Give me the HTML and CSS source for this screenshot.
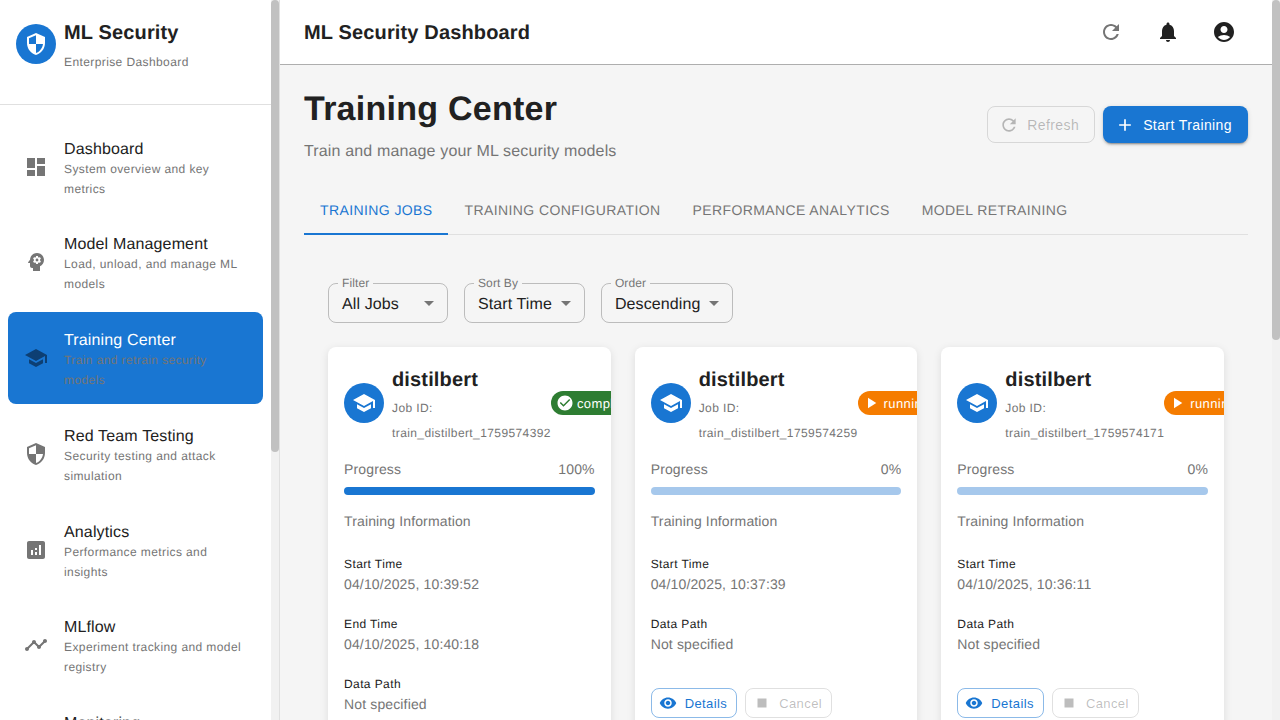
FILE: index.html
```html
<!DOCTYPE html>
<html lang="en">
<head>
<meta charset="utf-8">
<title>ML Security Dashboard</title>
<link rel="stylesheet" href="styles.css">
</head>
<body>
<svg class="sprite" aria-hidden="true">
  <symbol id="i-dashboard" viewBox="0 0 24 24"><path d="M3 13h8V3H3v10zm0 8h8v-6H3v6zm10 0h8V11h-8v10zm0-18v6h8V3h-8z"/></symbol>
  <symbol id="i-security" viewBox="0 0 24 24"><path d="M12 1 3 5v6c0 5.55 3.84 10.74 9 12 5.16-1.26 9-6.45 9-12V5l-9-4zm0 10.99h7c-.53 4.12-3.28 7.79-7 8.94V12H5V6.3l7-3.11v8.8z"/></symbol>
  <symbol id="i-school" viewBox="0 0 24 24"><path d="M5 13.18v4L12 21l7-3.82v-4L12 17l-7-3.82zM12 3 1 9l11 6 9-4.91V17h2V9L12 3z"/></symbol>
  <symbol id="i-psychology" viewBox="0 0 24 24"><path d="M13 8.57c-.79 0-1.43.64-1.43 1.43s.64 1.43 1.43 1.43 1.43-.64 1.43-1.43-.64-1.43-1.43-1.43z"/><path d="M13 3C9.25 3 6.2 5.94 6.02 9.64L4.1 12.2c-.25.33-.01.8.4.8H6v3c0 1.1.9 2 2 2h1v3h7v-4.68c2.36-1.12 4-3.53 4-6.32 0-3.87-3.13-7-7-7zm3 7c0 .13-.01.26-.02.39l.83.66c.08.06.1.16.05.25l-.8 1.39c-.05.09-.16.12-.24.09l-.99-.4c-.21.16-.43.29-.67.39L14 13.83c-.01.1-.1.17-.2.17h-1.6c-.1 0-.18-.07-.2-.17l-.15-1.06c-.25-.1-.47-.23-.68-.39l-.99.4c-.09.03-.2 0-.25-.09l-.8-1.39c-.05-.08-.03-.19.05-.25l.84-.66c-.01-.13-.02-.26-.02-.39s.02-.27.04-.39l-.85-.66c-.08-.06-.1-.16-.05-.26l.8-1.38c.05-.09.15-.12.24-.09l1 .4c.2-.15.43-.29.67-.39L12 6.17c.02-.1.1-.17.2-.17h1.6c.1 0 .18.07.2.17l.15 1.06c.24.1.46.23.67.39l1-.4c.09-.03.2 0 .24.09l.8 1.38c.05.09.03.2-.05.26l-.85.66c.03.12.04.25.04.39z"/></symbol>
  <symbol id="i-analytics" viewBox="0 0 24 24"><path d="M19 3H5c-1.1 0-2 .9-2 2v14c0 1.1.9 2 2 2h14c1.1 0 2-.9 2-2V5c0-1.1-.9-2-2-2zM9 17H7v-5h2v5zm4 0h-2v-3h2v3zm0-5h-2v-2h2v2zm4 5h-2V7h2v10z"/></symbol>
  <symbol id="i-timeline" viewBox="0 0 24 24"><path d="M23 8c0 1.1-.9 2-2 2-.18 0-.35-.02-.51-.07l-3.56 3.55c.05.16.07.34.07.52 0 1.1-.9 2-2 2s-2-.9-2-2c0-.18.02-.36.07-.52l-2.55-2.55c-.16.05-.34.07-.52.07s-.36-.02-.52-.07l-4.55 4.56c.05.16.07.33.07.51 0 1.1-.9 2-2 2s-2-.9-2-2 .9-2 2-2c.18 0 .35.02.51.07l4.56-4.55C8.02 9.36 8 9.18 8 9c0-1.1.9-2 2-2s2 .9 2 2c0 .18-.02.36-.07.52l2.55 2.55c.16-.05.34-.07.52-.07s.36.02.52.07l3.55-3.56C19.02 8.35 19 8.18 19 8c0-1.1.9-2 2-2s2 .9 2 2z"/></symbol>
  <symbol id="i-refresh" viewBox="0 0 24 24"><path d="M17.65 6.35C16.2 4.9 14.21 4 12 4c-4.42 0-7.99 3.58-7.99 8s3.57 8 7.99 8c3.73 0 6.84-2.55 7.73-6h-2.08c-.82 2.33-3.04 4-5.65 4-3.31 0-6-2.69-6-6s2.69-6 6-6c1.66 0 3.14.69 4.22 1.78L13 11h7V4l-2.35 2.35z"/></symbol>
  <symbol id="i-bell" viewBox="0 0 24 24"><path d="M12 22c1.1 0 2-.9 2-2h-4c0 1.1.89 2 2 2zm6-6v-5c0-3.07-1.64-5.64-4.5-6.32V4c0-.83-.67-1.5-1.5-1.5s-1.5.67-1.5 1.5v.68C7.63 5.36 6 7.92 6 11v5l-2 2v1h16v-1l-2-2z"/></symbol>
  <symbol id="i-account" viewBox="0 0 24 24"><path d="M12 2C6.48 2 2 6.48 2 12s4.48 10 10 10 10-4.48 10-10S17.52 2 12 2zm0 4c1.93 0 3.5 1.57 3.5 3.5S13.93 13 12 13s-3.5-1.57-3.5-3.5S10.07 6 12 6zm0 14c-2.03 0-4.43-.82-6.14-2.88C7.55 15.8 9.68 15 12 15s4.45.8 6.14 2.12C16.43 19.18 14.03 20 12 20z"/></symbol>
  <symbol id="i-add" viewBox="0 0 24 24"><path d="M19 13h-6v6h-2v-6H5v-2h6V5h2v6h6v2z"/></symbol>
  <symbol id="i-drop" viewBox="0 0 24 24"><path d="M7 10l5 5 5-5z"/></symbol>
  <symbol id="i-check" viewBox="0 0 24 24"><path d="M12 2C6.48 2 2 6.48 2 12s4.48 10 10 10 10-4.48 10-10S17.52 2 12 2zm-2 15-5-5 1.41-1.41L10 14.17l7.59-7.59L19 8l-9 9z"/></symbol>
  <symbol id="i-play" viewBox="0 0 24 24"><path d="M8 5v14l11-7z"/></symbol>
  <symbol id="i-eye" viewBox="0 0 24 24"><path d="M12 4.5C7 4.5 2.73 7.61 1 12c1.73 4.39 6 7.5 11 7.5s9.27-3.11 11-7.5c-1.73-4.39-6-7.5-11-7.5zM12 17c-2.76 0-5-2.24-5-5s2.24-5 5-5 5 2.24 5 5-2.24 5-5 5zm0-8c-1.66 0-3 1.34-3 3s1.34 3 3 3 3-1.34 3-3-1.34-3-3-3z"/></symbol>
  <symbol id="i-stop" viewBox="0 0 24 24"><path d="M6 6h12v12H6z"/></symbol>
</svg>

<div class="app">
  <aside class="sidebar">
    <div class="sidebar-body">
      <div class="brand">
        <div class="brand-logo"><svg class="icon"><use href="#i-security"/></svg></div>
        <div class="brand-text">
          <div class="brand-title">ML Security</div>
          <div class="brand-sub">Enterprise Dashboard</div>
        </div>
      </div>
      <nav class="nav">
        <a class="nav-item"><svg class="icon nav-icon"><use href="#i-dashboard"/></svg><span class="nav-text"><span class="nav-title">Dashboard</span><span class="nav-sub">System overview and key metrics</span></span></a>
        <a class="nav-item"><svg class="icon nav-icon"><use href="#i-psychology"/></svg><span class="nav-text"><span class="nav-title">Model Management</span><span class="nav-sub">Load, unload, and manage ML models</span></span></a>
        <a class="nav-item active"><svg class="icon nav-icon"><use href="#i-school"/></svg><span class="nav-text"><span class="nav-title">Training Center</span><span class="nav-sub">Train and retrain security models</span></span></a>
        <a class="nav-item"><svg class="icon nav-icon"><use href="#i-security"/></svg><span class="nav-text"><span class="nav-title">Red Team Testing</span><span class="nav-sub">Security testing and attack simulation</span></span></a>
        <a class="nav-item"><svg class="icon nav-icon"><use href="#i-analytics"/></svg><span class="nav-text"><span class="nav-title">Analytics</span><span class="nav-sub">Performance metrics and insights</span></span></a>
        <a class="nav-item"><svg class="icon nav-icon"><use href="#i-timeline"/></svg><span class="nav-text"><span class="nav-title">MLflow</span><span class="nav-sub">Experiment tracking and model registry</span></span></a>
        <a class="nav-item"><svg class="icon nav-icon"><use href="#i-analytics"/></svg><span class="nav-text"><span class="nav-title">Monitoring</span><span class="nav-sub">System health and performance monitoring</span></span></a>
      </nav>
    </div>
    <div class="scroll-track"><div class="scroll-thumb thumb-side"></div></div>
  </aside>

  <main class="main">
    <div class="main-body">
      <header class="topbar">
        <div class="topbar-title">ML Security Dashboard</div>
        <div class="topbar-actions">
          <span class="icon-btn muted"><svg class="icon"><use href="#i-refresh"/></svg></span>
          <span class="icon-btn"><svg class="icon"><use href="#i-bell"/></svg></span>
          <span class="icon-btn"><svg class="icon"><use href="#i-account"/></svg></span>
        </div>
      </header>

      <div class="page">
        <div class="page-head">
          <div>
            <h1 class="page-title">Training Center</h1>
            <p class="page-sub">Train and manage your ML security models</p>
          </div>
          <div class="page-actions">
            <button class="btn btn-disabled"><svg class="icon btn-icon"><use href="#i-refresh"/></svg>Refresh</button>
            <button class="btn btn-primary"><svg class="icon btn-icon"><use href="#i-add"/></svg>Start Training</button>
          </div>
        </div>

        <div class="tabs">
          <span class="tab active">Training Jobs</span>
          <span class="tab">Training Configuration</span>
          <span class="tab">Performance Analytics</span>
          <span class="tab">Model Retraining</span>
        </div>

        <section class="panel">
          <div class="filters">
            <div class="select select-filter"><span class="select-label">Filter</span><span>All Jobs</span><svg class="icon select-arrow"><use href="#i-drop"/></svg></div>
            <div class="select"><span class="select-label">Sort By</span><span>Start Time</span><svg class="icon select-arrow"><use href="#i-drop"/></svg></div>
            <div class="select"><span class="select-label">Order</span><span>Descending</span><svg class="icon select-arrow"><use href="#i-drop"/></svg></div>
          </div>

          <div class="cards">
            <article class="card">
              <div class="card-head">
                <div class="avatar"><svg class="icon"><use href="#i-school"/></svg></div>
                <div class="card-id">
                  <div class="job-name">distilbert</div>
                  <div class="job-line">Job ID:</div>
                  <div class="job-line">train_distilbert_1759574392</div>
                </div>
                <span class="chip chip-done"><svg class="icon chip-icon"><use href="#i-check"/></svg>completed</span>
              </div>
              <div class="progress-row"><span>Progress</span><span>100%</span></div>
              <div class="bar"><div class="bar-fill"></div></div>
              <div class="info-title">Training Information</div>
              <div class="info-label first">Start Time</div>
              <div class="info-value">04/10/2025, 10:39:52</div>
              <div class="info-label">End Time</div>
              <div class="info-value">04/10/2025, 10:40:18</div>
              <div class="info-label">Data Path</div>
              <div class="info-value">Not specified</div>
              <div class="card-actions">
                <button class="btn-sm btn-sm-blue"><svg class="icon sm-icon"><use href="#i-eye"/></svg>Details</button>
              </div>
            </article>

            <article class="card">
              <div class="card-head">
                <div class="avatar"><svg class="icon"><use href="#i-school"/></svg></div>
                <div class="card-id">
                  <div class="job-name">distilbert</div>
                  <div class="job-line">Job ID:</div>
                  <div class="job-line">train_distilbert_1759574259</div>
                </div>
                <span class="chip chip-run"><svg class="icon chip-icon play"><use href="#i-play"/></svg>running</span>
              </div>
              <div class="progress-row"><span>Progress</span><span>0%</span></div>
              <div class="bar"></div>
              <div class="info-title">Training Information</div>
              <div class="info-label first">Start Time</div>
              <div class="info-value">04/10/2025, 10:37:39</div>
              <div class="info-label">Data Path</div>
              <div class="info-value">Not specified</div>
              <div class="card-actions">
                <button class="btn-sm btn-sm-blue"><svg class="icon sm-icon"><use href="#i-eye"/></svg>Details</button>
                <button class="btn-sm btn-sm-off"><svg class="icon sm-icon"><use href="#i-stop"/></svg>Cancel</button>
              </div>
            </article>

            <article class="card">
              <div class="card-head">
                <div class="avatar"><svg class="icon"><use href="#i-school"/></svg></div>
                <div class="card-id">
                  <div class="job-name">distilbert</div>
                  <div class="job-line">Job ID:</div>
                  <div class="job-line">train_distilbert_1759574171</div>
                </div>
                <span class="chip chip-run"><svg class="icon chip-icon play"><use href="#i-play"/></svg>running</span>
              </div>
              <div class="progress-row"><span>Progress</span><span>0%</span></div>
              <div class="bar"></div>
              <div class="info-title">Training Information</div>
              <div class="info-label first">Start Time</div>
              <div class="info-value">04/10/2025, 10:36:11</div>
              <div class="info-label">Data Path</div>
              <div class="info-value">Not specified</div>
              <div class="card-actions">
                <button class="btn-sm btn-sm-blue"><svg class="icon sm-icon"><use href="#i-eye"/></svg>Details</button>
                <button class="btn-sm btn-sm-off"><svg class="icon sm-icon"><use href="#i-stop"/></svg>Cancel</button>
              </div>
            </article>
          </div>
        </section>
      </div>
    </div>
    <div class="scroll-track"><div class="scroll-thumb thumb-main"></div></div>
  </main>
</div>
</body>
</html>
```

FILE: styles.css
```css
* { box-sizing: border-box; }
html, body { margin: 0; height: 100%; overflow: hidden; }
body {
  font-family: "Liberation Sans", Arial, sans-serif;
  color: #212121;
  background: #f5f5f5;
  text-rendering: geometricPrecision;
}
.sprite { display: none; }
.icon { width: 24px; height: 24px; fill: currentColor; flex: none; display: block; }

.app { display: flex; height: 720px; }

.sidebar, .main { display: flex; height: 720px; overflow: hidden; }
.sidebar-body, .main-body { flex: 1; min-width: 0; height: 720px; overflow: hidden; }
.scroll-track { width: 8px; flex: none; height: 720px; background: #f1f1f1; }
.scroll-thumb { background: #c1c1c1; border-radius: 4px; }
.thumb-side { height: 452px; }
.thumb-main { height: 340px; }

.sidebar {
  width: 280px;
  flex: none;
  background: #fff;
  border-right: 1px solid #e0e0e0;
}
.main { flex: 1; min-width: 0; }
.brand {
  display: flex;
  gap: 8px;
  height: 105px;
  padding: 16px 16px 0;
  border-bottom: 1px solid #e0e0e0;
}
.brand-logo {
  width: 40px; height: 40px;
  margin-top: 8px;
  border-radius: 50%;
  background: #1976d2;
  color: #fff;
  display: flex; align-items: center; justify-content: center;
  flex: none;
}
.brand-title { font-size: 20px; font-weight: 700; line-height: 34px; letter-spacing: 0.15px; }
.brand-sub { font-size: 12px; line-height: 20px; margin-top: 2px; color: #757575; letter-spacing: 0.4px; }

.nav { padding: 15.5px 8px 8px; }
.nav-item {
  display: flex;
  align-items: center;
  height: 92px;
  margin-bottom: 3.75px;
  padding: 0 16px;
  border-radius: 8px;
  color: #212121;
}
.nav-icon { color: #757575; margin-right: 16px; }
.nav-text { display: block; padding-top: 3px; }
.nav-title { display: block; font-size: 16px; line-height: 24px; margin-bottom: -3px; letter-spacing: 0.15px; }
.nav-sub { display: block; font-size: 12px; line-height: 20px; color: #757575; letter-spacing: 0.4px; }
.nav-item.active { background: #1976d2; color: #fff; }
.nav-item.active .nav-icon { color: #0d3f73; }

.topbar {
  height: 65px;
  background: #fff;
  border-bottom: 1px solid #aeaeae;
  display: flex;
  align-items: center;
  justify-content: space-between;
  padding: 0 24px;
}
.topbar-title { font-size: 20px; font-weight: 700; letter-spacing: 0.15px; padding-top: 2px; }
.topbar-actions { display: flex; gap: 8px; }
.icon-btn { width: 48px; height: 48px; display: flex; align-items: center; justify-content: center; color: #212121; }
.icon-btn.muted { color: #757575; margin-left: -1px; margin-right: 1px; }

.page { padding: 24px; }
.page-head { display: flex; justify-content: space-between; align-items: flex-start; height: 73px; margin-bottom: 24px; }
.page-title { margin: 0; font-size: 34px; line-height: 40px; font-weight: 700; letter-spacing: 0.25px; }
.page-sub { margin: 10px 0 0; font-size: 16px; line-height: 26px; color: #757575; letter-spacing: 0.15px; }
.page-actions { display: flex; gap: 8px; margin-top: 17px; }

.btn {
  display: inline-flex;
  align-items: center;
  height: 37px;
  padding: 0 16px 0 12px;
  border-radius: 8px;
  font: inherit;
  font-size: 14px;
  letter-spacing: 0.4px;
  border: 1px solid transparent;
}
.btn-icon { width: 20px; height: 20px; margin-right: 8px; }
.btn-disabled { background: transparent; border-color: rgba(0,0,0,.12); color: rgba(0,0,0,.26); padding-left: 11px; padding-right: 15px; }
.btn-primary { background: #1976d2; color: #fff; box-shadow: 0 3px 1px -2px rgba(0,0,0,.2), 0 2px 2px rgba(0,0,0,.14), 0 1px 5px rgba(0,0,0,.12); border: 0; }

.tabs { display: flex; border-bottom: 1px solid #e0e0e0; height: 49px; }
.tab {
  position: relative;
  display: flex;
  align-items: center;
  height: 48px;
  padding: 0 16px;
  font-size: 14px;
  letter-spacing: 0.4px;
  text-transform: uppercase;
  color: #757575;
}
.tab.active { color: #1976d2; }
.tab.active::after {
  content: "";
  position: absolute;
  left: 0; right: 0.5px; bottom: -1px;
  height: 2px;
  background: #1976d2;
}

.panel { padding: 24px; }
.filters { display: flex; gap: 16px; margin-top: 24px; margin-bottom: 24px; }
.select {
  position: relative;
  display: flex;
  align-items: center;
  height: 40px;
  padding: 3px 32px 0 13px;
  border: 1px solid rgba(0,0,0,.23);
  border-radius: 8px;
  font-size: 16px;
  letter-spacing: 0.1px;
}
.select-filter { min-width: 120px; }
.select-label {
  position: absolute;
  left: 9px; top: -8px;
  padding: 0 4px;
  font-size: 12px;
  line-height: 14px;
  color: #757575;
  letter-spacing: 0.1px;
  background: #f5f5f5;
}
.select-arrow { position: absolute; right: 6px; top: 7px; color: #757575; }

.cards { display: grid; grid-template-columns: repeat(3, minmax(0, 1fr)); gap: 24px; align-items: start; }
.card {
  background: #fff;
  border-radius: 8px;
  padding: 16px;
  overflow: hidden;
  box-shadow: 0 2px 8px rgba(0,0,0,.1);
}
.card-head { display: flex; align-items: flex-start; height: 81px; }
.avatar {
  width: 40px; height: 40px;
  margin-top: 20px;
  margin-right: 8px;
  border-radius: 50%;
  background: #1976d2;
  color: #fff;
  display: flex; align-items: center; justify-content: center;
  flex: none;
}
.card-id { flex: none; }
.job-name { font-size: 20px; font-weight: 700; line-height: 32px; letter-spacing: 0.15px; padding-top: 1px; }
.job-line { font-size: 12px; line-height: 24.5px; color: #757575; letter-spacing: 0.4px; }
.chip {
  flex: none;
  display: inline-flex;
  align-items: center;
  height: 24px;
  margin-top: 28px;
  padding: 0 8px 0 5px;
  border-radius: 12px;
  color: #fff;
  font-size: 13px;
  letter-spacing: 0.4px;
}
.chip-icon { width: 18px; height: 18px; margin-right: 3px; }
.chip-icon.play { margin-left: -1px; margin-right: 4px; }
.chip-done { background: #2e7d32; }
.chip-run { background: #f57c00; }

.progress-row { display: flex; justify-content: space-between; margin-top: 15px; font-size: 14px; line-height: 21px; color: #757575; letter-spacing: 0.14px; }
.bar { height: 8px; margin-top: 7px; border-radius: 4px; background: #a6c8ec; overflow: hidden; }
.bar-fill { width: 100%; height: 100%; background: #1976d2; }
.info-title { margin-top: 16px; font-size: 14px; line-height: 21px; color: #757575; letter-spacing: 0.14px; }
.info-label { margin-top: 19px; font-size: 12px; line-height: 20px; letter-spacing: 0.4px; }
.info-label.first { margin-top: 22px; }
.info-value { font-size: 14px; line-height: 21px; color: #757575; letter-spacing: 0.14px; }
.card-actions { display: flex; gap: 8px; margin-top: 33px; }
.btn-sm {
  display: inline-flex;
  align-items: center;
  height: 30px;
  padding: 0 9px 0 7px;
  border-radius: 8px;
  background: transparent;
  font: inherit;
  font-size: 13px;
  letter-spacing: 0.4px;
  border: 1px solid;
}
.sm-icon { width: 18px; height: 18px; margin-right: 8px; }
.btn-sm-blue { color: #1976d2; border-color: rgba(25,118,210,.5); }
.btn-sm-off { color: rgba(0,0,0,.26); border-color: rgba(0,0,0,.12); }
```
